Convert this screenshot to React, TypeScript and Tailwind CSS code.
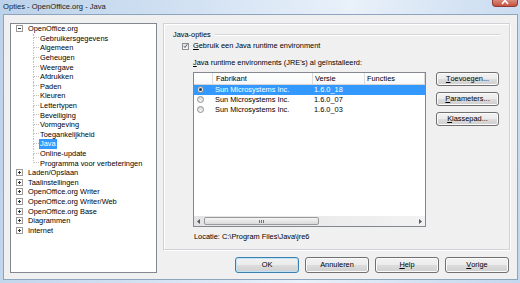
import type { ReactNode } from 'react';

const font = { fontFamily: '"Liberation Sans", Arial, sans-serif' };

const ooChildren = [
  'Gebruikersgegevens',
  'Algemeen',
  'Geheugen',
  'Weergave',
  'Afdrukken',
  'Paden',
  'Kleuren',
  'Lettertypen',
  'Beveiliging',
  'Vormgeving',
  'Toegankelijkheid',
  'Java',
  'Online-update',
  'Programma voor verbeteringen',
];

const collapsed = [
  'Laden/Opslaan',
  'Taalinstellingen',
  'OpenOffice.org Writer',
  'OpenOffice.org Writer/Web',
  'OpenOffice.org Base',
  'Diagrammen',
  'Internet',
];

const jres = [
  { vendor: 'Sun Microsystems Inc.', version: '1.6.0_18', selected: true },
  { vendor: 'Sun Microsystems Inc.', version: '1.6.0_07', selected: false },
  { vendor: 'Sun Microsystems Inc.', version: '1.6.0_03', selected: false },
];

function Expander({ open }: { open: boolean }) {
  return (
    <div className="relative flex h-[7px] w-[7px] shrink-0 items-center justify-center border border-[#9a9a9a] bg-white">
      <div className="h-[1px] w-[3px] bg-[#333]" />
      {!open && <div className="absolute h-[3px] w-[1px] bg-[#333]" />}
    </div>
  );
}

function TreeTop({ label, open }: { label: string; open: boolean }) {
  return (
    <div className="flex h-[9.6px] items-center pl-[5px]">
      <Expander open={open} />
      <span className="ml-[5px] whitespace-nowrap">{label}</span>
    </div>
  );
}

function TreeChild({ label, last, selected }: { label: string; last: boolean; selected: boolean }) {
  return (
    <div className="flex h-[9.6px] items-stretch pl-[22px]">
      <div className="flex w-[6px] flex-col">
        <div className="h-1/2 border-b border-l border-dotted border-[#c4c4c4]" />
        <div className={`h-1/2 ${last ? '' : 'border-l border-dotted border-[#c4c4c4]'}`} />
      </div>
      <span
        className={`flex items-center whitespace-nowrap px-[1px] ${selected ? 'bg-[#3399ff] text-white' : ''}`}
      >
        {label}
      </span>
    </div>
  );
}

function Button({ children, primary, className = '' }: { children: ReactNode; primary?: boolean; className?: string }) {
  return (
    <div
      className={`flex items-center justify-center rounded-[3px] border bg-[linear-gradient(#f2f2f2,#ebebeb_50%,#dddddd_50%,#cfcfcf)] ${
        primary
          ? 'border-[#3c7fb1] shadow-[inset_0_0_0_1px_#bfe2f7]'
          : 'border-[#707070] shadow-[inset_0_0_0_1px_#fbfbfb]'
      } ${className}`}
    >
      {children}
    </div>
  );
}

function Radio({ checked }: { checked: boolean }) {
  return (
    <div className="flex h-[7px] w-[7px] items-center justify-center rounded-full border border-[#8e8f8f] bg-[linear-gradient(#d8d8d8,#f6f6f6)]">
      {checked && <div className="h-[3px] w-[3px] rounded-full bg-[#1e3b5a]" />}
    </div>
  );
}

export default function App() {
  return (
    <div
      style={font}
      className="flex h-[283px] w-[520px] flex-col overflow-hidden bg-[linear-gradient(100deg,#bcd2ea,#d3e2f3_35%,#e9f1fa_62%,#d7e5f4_78%,#c3d7ee)] text-[7.4px] text-black"
    >
      {/* title bar */}
      <div className="flex h-[14px] shrink-0 items-start pl-[3px] pr-[2px]">
        <span className="pt-[2px] text-[7.6px] leading-[10px] text-[#1a1a1a]">Opties - OpenOffice.org - Java</span>
        <div className="ml-auto flex h-[7px] w-[26px] items-end justify-center overflow-hidden rounded-b-[4px] border border-t-0 border-[#8b3b34] bg-[linear-gradient(#d88a7c,#c8503d)]">
          <svg width="8" height="6" viewBox="0 0 8 6" className="mb-[1px]">
            <path d="M1 -2 L7 5 M7 -2 L1 5" stroke="#ffffff" strokeWidth="1.6" />
          </svg>
        </div>
      </div>

      {/* client area */}
      <div className="ml-[3px] mr-[2px] flex h-[266px] shrink-0 border border-[#8da4bf] bg-[#f0f0f0] pl-[6px] pt-[8px]">
        {/* tree */}
        <div className="h-[250px] w-[147px] shrink-0 overflow-hidden border border-[#828790] bg-white">
          <TreeTop label="OpenOffice.org" open />
          {ooChildren.map((c, i) => (
            <TreeChild key={c} label={c} last={i === ooChildren.length - 1} selected={c === 'Java'} />
          ))}
          {collapsed.map((c) => (
            <TreeTop key={c} label={c} open={false} />
          ))}
        </div>

        {/* right column */}
        <div className="ml-[6px] flex w-[347px] flex-col">
          <div className="flex h-[227px] flex-col border border-[#cfd3d7] shadow-[inset_1px_1px_0_#ffffff,1px_1px_0_#ffffff]">
            {/* group title */}
            <div className="mt-[6px] flex h-[10px] items-center gap-[4px] pl-[9px] pr-[9px]">
              <span className="whitespace-nowrap">Java-opties</span>
              <div className="h-[2px] flex-1 border-b border-t border-b-white border-t-[#d5d5d5]" />
            </div>

            {/* checkbox */}
            <div className="mt-[1px] flex h-[10px] items-center pl-[18px]">
              <div className="flex h-[7px] w-[7px] items-center justify-center border border-[#8e8f8f] bg-[linear-gradient(#e0e0e0,#fafafa)]">
                <svg width="6" height="6" viewBox="0 0 6 6">
                  <path d="M1 3.2 L2.4 4.8 L5 1" fill="none" stroke="#2b3f5c" strokeWidth="1" />
                </svg>
              </div>
              <span className="ml-[4px] whitespace-nowrap">
                <span className="underline">G</span>ebruik een Java runtime environment
              </span>
            </div>

            {/* list label */}
            <div className="mt-[7px] flex h-[10px] items-center pl-[29px]">
              <span className="whitespace-nowrap">
                <span className="underline">J</span>ava runtime environments (JRE's) al geïnstalleerd:
              </span>
            </div>

            {/* table + side buttons */}
            <div className="mt-[4px] flex pl-[29px]">
              <div className="flex h-[155px] w-[233px] flex-col border border-[#828790] bg-white">
                <div className="flex h-[12px] shrink-0 border-b border-[#d5d5d5] bg-[linear-gradient(#ffffff,#f7f8fa)]">
                  <div className="w-[19px] border-r border-[#dcdcdc]" />
                  <div className="flex w-[100px] items-center border-r border-[#dcdcdc] pl-[3px]">Fabrikant</div>
                  <div className="flex w-[52px] items-center border-r border-[#dcdcdc] pl-[2px]">Versie</div>
                  <div className="flex flex-1 items-center border-r border-[#dcdcdc] pl-[2px]">Functies</div>
                </div>
                {jres.map((j) => (
                  <div
                    key={j.version}
                    className={`flex h-[9.65px] shrink-0 items-center ${j.selected ? 'bg-[#3399ff] text-white' : ''}`}
                  >
                    <div className="flex w-[19px] items-center pl-[3px]">
                      <Radio checked={j.selected} />
                    </div>
                    <div className="w-[100px] whitespace-nowrap pl-[2px]">{j.vendor}</div>
                    <div className="w-[52px] pl-[1px]">{j.version}</div>
                  </div>
                ))}
                <div className="flex-1" />
                {/* horizontal scrollbar */}
                <div className="flex h-[10px] shrink-0 items-stretch bg-[linear-gradient(90deg,#e3e3e3,#f2f2f2)]">
                  <div className="flex w-[10px] items-center justify-center">
                    <svg width="4" height="5" viewBox="0 0 4 5">
                      <path d="M3 0 L0 2.5 L3 5 Z" fill="#4f5a6b" />
                    </svg>
                  </div>
                  <div className="my-[1px] flex w-[115px] items-center justify-center rounded-[2px] border border-[#9a9a9a] bg-[linear-gradient(#f4f4f4,#dadada)]">
                    <div className="flex gap-[1px]">
                      <div className="h-[3px] w-[1px] bg-[#707070]" />
                      <div className="h-[3px] w-[1px] bg-[#707070]" />
                      <div className="h-[3px] w-[1px] bg-[#707070]" />
                    </div>
                  </div>
                  <div className="flex-1" />
                  <div className="flex w-[10px] items-center justify-center">
                    <svg width="4" height="5" viewBox="0 0 4 5">
                      <path d="M1 0 L4 2.5 L1 5 Z" fill="#4f5a6b" />
                    </svg>
                  </div>
                </div>
              </div>

              <div className="ml-[10px] flex w-[63px] flex-col gap-[6px]">
                <Button className="h-[14px]">
                  <span className="underline">T</span>oevoegen...
                </Button>
                <Button className="h-[14px]">
                  <span className="underline">P</span>arameters...
                </Button>
                <Button className="h-[14px]">
                  <span className="underline">K</span>lassepad...
                </Button>
              </div>
            </div>

            <div className="mt-[5px] flex h-[10px] items-center pl-[30px]">
              <span className="whitespace-nowrap">Locatie: C:\Program Files\Java\jre6</span>
            </div>
          </div>

          {/* dialog buttons */}
          <div className="mt-[7px] flex h-[16px] justify-end gap-[6px] pr-[1px]">
            <Button primary className="w-[64px]">OK</Button>
            <Button className="w-[64px]">Annuleren</Button>
            <Button className="w-[64px]">
              <span className="underline">H</span>elp
            </Button>
            <Button className="w-[64px]">
              <span className="underline">V</span>orige
            </Button>
          </div>
        </div>
      </div>
    </div>
  );
}
